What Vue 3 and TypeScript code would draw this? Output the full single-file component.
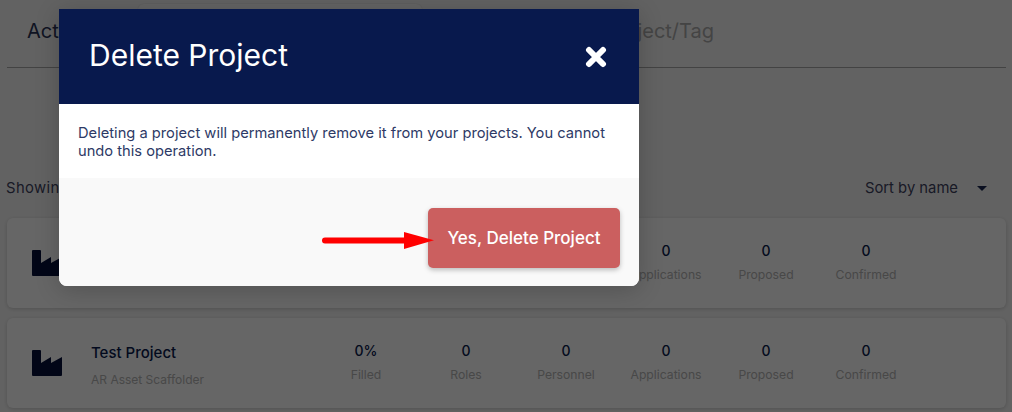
<template>
  <div class="page">
    <div class="tabs">
      <span class="tab active">Active</span>
      <div class="search"></div>
      <span class="tab muted">Search by Project/Tag</span>
    </div>

    <div class="toolbar">
      <span class="showing">Showing 2 projects</span>
      <span class="sort">Sort by name <i class="caret"></i></span>
    </div>

    <div v-for="project in projects" :key="project.name" class="card">
      <svg class="factory" viewBox="0 0 30 26" aria-hidden="true">
        <path d="M1 0h7a1 1 0 0 1 1 1v12l10-6v6l11-6v18a1 1 0 0 1-1 1H1a1 1 0 0 1-1-1V1a1 1 0 0 1 1-1z" />
      </svg>
      <div class="info">
        <div class="name">{{ project.name }}</div>
        <div class="client">{{ project.client }}</div>
      </div>
      <div class="stats">
        <div v-for="stat in project.stats" :key="stat.label" class="stat">
          <div class="value">{{ stat.value }}</div>
          <div class="label">{{ stat.label }}</div>
        </div>
      </div>
    </div>

    <div class="overlay"></div>

    <div class="modal">
      <div class="modal-header">
        <h2>Delete Project</h2>
        <svg class="close" viewBox="0 0 22 22" aria-hidden="true">
          <path d="M4 4l14 14M18 4L4 18" />
        </svg>
      </div>
      <p class="modal-body">
        Deleting a project will permanently remove it from your projects. You cannot undo this operation.
      </p>
      <div class="modal-footer">
        <svg class="arrow" width="114" height="20" viewBox="0 0 114 20" aria-hidden="true">
          <path class="shaft" d="M4 10.5h82" />
          <path class="head" d="M83 2l30 8.3-30 8.7z" />
        </svg>
        <button class="danger" type="button">Yes, Delete Project</button>
      </div>
    </div>
  </div>
</template>

<script setup lang="ts">
interface Stat {
  label: string;
  value: string;
}

interface Project {
  name: string;
  client: string;
  stats: Stat[];
}

const emptyStats: Stat[] = [
  { label: 'Filled', value: '0%' },
  { label: 'Roles', value: '0' },
  { label: 'Personnel', value: '0' },
  { label: 'Applications', value: '0' },
  { label: 'Proposed', value: '0' },
  { label: 'Confirmed', value: '0' },
];

const projects: Project[] = [
  { name: 'New Project', client: 'AR Asset Scaffolder', stats: emptyStats },
  { name: 'Test Project', client: 'AR Asset Scaffolder', stats: emptyStats },
];
</script>

<style>
html,
body {
  margin: 0;
  overflow: hidden;
}
</style>

<style scoped>
.page {
  position: relative;
  width: 1012px;
  height: 412px;
  box-sizing: border-box;
  padding: 0 6px 0 7px;
  overflow: hidden;
  background: #f6f6f6;
  font-family: Inter, Roboto, sans-serif;
  color: #08194d;
}

.tabs {
  display: flex;
  align-items: center;
  height: 68px;
  padding: 0 20px 5px;
  box-sizing: border-box;
  border-bottom: 1px solid #a8a8a8;
  font-size: 20px;
  position: relative;
}

.tab.active {
  color: #2a3355;
}

.tab.muted {
  margin-left: auto;
  margin-right: 272px;
  color: #aaaaaa;
}

.search {
  position: absolute;
  left: 131px;
  top: 4px;
  width: 284px;
  height: 40px;
  border-radius: 6px;
  background: #fbfbfb;
  box-shadow: 0 0 2px rgba(0, 0, 0, 0.15);
}

.toolbar {
  display: flex;
  justify-content: space-between;
  align-items: center;
  height: 20px;
  margin-top: 110px;
  margin-bottom: 20px;
  margin-left: -1px;
  font-size: 14.8px;
  color: #3e4260;
}

.showing {
  letter-spacing: 0.4px;
}

.sort {
  display: flex;
  align-items: center;
  margin-right: 19px;
}

.caret {
  width: 0;
  height: 0;
  margin-left: 19px;
  border-left: 5px solid transparent;
  border-right: 5px solid transparent;
  border-top: 5px solid #1a2650;
}

.card {
  display: flex;
  align-items: center;
  height: 90px;
  margin-bottom: 10px;
  padding-left: 25px;
  border-radius: 6px;
  background: #ffffff;
  box-shadow: 0 1px 4px rgba(0, 0, 0, 0.18);
}

.factory {
  width: 30px;
  height: 26px;
  fill: #05103a;
  flex: none;
}

.info {
  width: 225px;
  margin-top: 4px;
  margin-left: 29px;
  flex: none;
}

.name {
  font-size: 15px;
  font-weight: 500;
  color: #08194d;
}

.client {
  margin-top: 10px;
  font-size: 12px;
  color: #b4b4b4;
}

.stats {
  display: flex;
  margin-top: -3px;
}

.stat {
  width: 100px;
  text-align: center;
}

.value {
  font-size: 14px;
  font-weight: 500;
  color: #08194d;
}

.label {
  margin-top: 8px;
  font-size: 12.2px;
  color: #b4b4b4;
}

.overlay {
  position: absolute;
  inset: 0;
  background: rgba(0, 0, 0, 0.6);
}

.modal {
  position: absolute;
  left: 59px;
  top: 9px;
  width: 580px;
  height: 277px;
  display: flex;
  flex-direction: column;
  border-radius: 0 0 8px 8px;
  overflow: hidden;
  background: #ffffff;
  box-shadow: 0 4px 24px rgba(0, 0, 0, 0.2);
}

.modal-header {
  display: flex;
  align-items: center;
  justify-content: space-between;
  height: 95px;
  padding: 0 32px 4px 30px;
  box-sizing: border-box;
  background: #08194d;
  color: #ffffff;
  flex: none;
}

.modal-header h2 {
  margin: 0;
  font-size: 30px;
  font-weight: 400;
}

.close {
  width: 22px;
  height: 22px;
  margin-top: 4px;
  fill: none;
  stroke: #ffffff;
  stroke-width: 6;
  stroke-linecap: round;
}

.modal-body {
  height: 74px;
  box-sizing: border-box;
  margin: 0;
  padding: 20px 30px 0 19px;
  font-size: 14.7px;
  line-height: 18px;
  color: #2e3a66;
  flex: none;
}

.modal-footer {
  display: flex;
  align-items: flex-start;
  justify-content: flex-end;
  flex: 1;
  padding: 30px 19px 0 0;
  background: #f9f9f9;
  position: relative;
}

.danger {
  width: 192px;
  height: 60px;
  border: 0;
  border-radius: 5px;
  background: #cb5f5f;
  color: #ffffff;
  font-family: inherit;
  font-size: 17px;
  font-weight: 500;
  box-shadow: 0 2px 5px rgba(0, 0, 0, 0.25);
}

.arrow {
  position: absolute;
  left: 262px;
  top: 52px;
  z-index: 1;
}

.shaft {
  fill: none;
  stroke: #ff0000;
  stroke-width: 6;
  stroke-linecap: round;
}

.head {
  fill: #ff0000;
}
</style>
